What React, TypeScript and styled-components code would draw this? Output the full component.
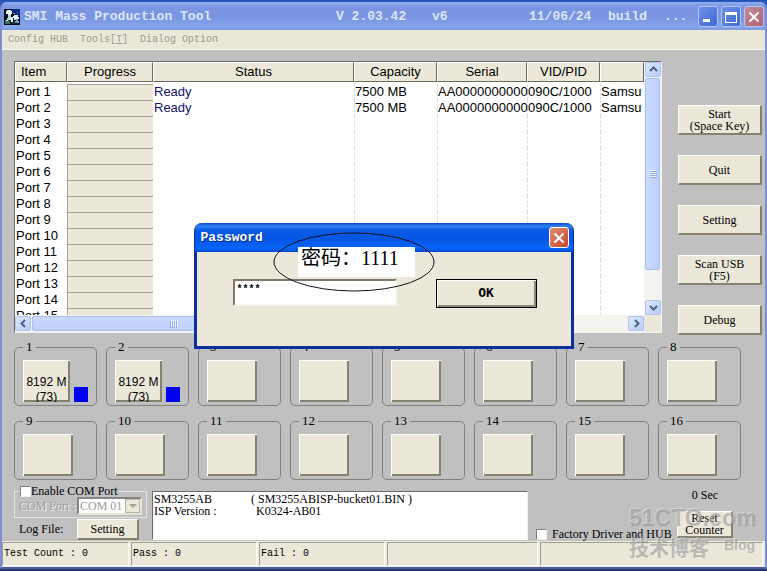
import React from "react";
import styled, { createGlobalStyle } from "styled-components";

const GRAY = "#c0c0c0";
const FACE = "#ebe8d9";
const SERIF = '"Liberation Serif", "Noto Sans CJK SC", serif';
const SANS = '"Liberation Sans", Arial, sans-serif';
const MONO = '"Liberation Mono", "Courier New", monospace';

const GlobalStyle = createGlobalStyle`
  * { box-sizing: border-box; }
  body { margin: 0; background: #2a56b8; color: #000; font-family: ${SERIF}; font-size: 12px; }
  button, input, select { font: inherit; color: inherit; margin: 0; }
`;

const Desktop = styled.div`
  position: relative;
  min-height: 100vh;
  padding-top: 2px;
  display: flex;
  flex-direction: column;
  background: linear-gradient(#1f4fb4, #2c5cc0 2px, #24386e);
`;

const AppWindow = styled.main`
  flex: 1;
  display: flex;
  flex-direction: column;
  border: solid #7b8fd2;
  border-width: 0 2px 0 2px;
  border-bottom: 2px solid #4a5f9e;
  margin-bottom: 2px;
  border-radius: 7px 7px 0 0;
  background: ${GRAY};
`;

const TitleBar = styled.header`
  height: 28px;
  display: flex;
  align-items: center;
  gap: 4px;
  padding: 1px 1px 0 2px;
  border-radius: 6px 6px 0 0;
  background: linear-gradient(#8fadee, #7b95e2 5px, #7a96e0 16px, #85a6ee 25px, #7c97de);
`;

const TitleText = styled.h1`
  flex: 1;
  display: grid;
  grid-template-columns: 312px 96px 97px 79px 56px auto;
  margin: 0;
  font: bold 13px/16px ${MONO};
  color: #dbe6fb;
  white-space: pre;
`;

const CaptionButtons = styled.div`
  display: flex;
  gap: 3px;
`;

const CaptionButton = styled.button<{ $tone: "blue" | "rose" | "red" }>`
  width: 20px;
  height: 21px;
  padding: 0;
  display: grid;
  place-items: center;
  border: 1px solid ${(p) => (p.$tone === "red" ? "#fff" : "#b4c5f3")};
  border-radius: 3px;
  background: ${(p) =>
    p.$tone === "blue"
      ? "linear-gradient(135deg, #6f90e6, #3f69d4)"
      : p.$tone === "rose"
        ? "linear-gradient(135deg, #c48a9c, #b0606c)"
        : "linear-gradient(135deg, #e29078, #c9452a)"};
`;

const MenuBar = styled.nav`
  height: 20px;
  display: flex;
  align-items: center;
  gap: 12px;
  padding: 1px 6px 0;
  background: ${FACE};
  border-bottom: 1px solid #f8f7f0;
`;

const MenuItem = styled.button`
  padding: 0;
  border: 0;
  background: none;
  font: 10px/14px ${MONO};
  color: #9d9a8b;
`;

const Content = styled.div`
  flex: 1;
  display: flex;
  flex-direction: column;
  gap: 5px;
  padding: 11px 3px 0 12px;
`;

const TopArea = styled.section`
  display: flex;
  gap: 16px;
`;

const ListFrame = styled.div`
  flex: 1;
  min-width: 0;
  height: 272px;
  display: grid;
  grid-template-columns: minmax(0, 1fr) 17px;
  grid-template-rows: minmax(0, 1fr) 17px;
  border: 1px solid;
  border-color: #6b6b6b #f4f4f4 #f4f4f4 #6b6b6b;
  background: #fff;
`;

const ListViewport = styled.div`
  overflow: hidden;
`;

const ListTable = styled.table`
  width: 100%;
  table-layout: fixed;
  border-collapse: separate;
  border-spacing: 0;
  font: 13px/16px ${SANS};
`;

const Col = styled.col<{ $w?: number }>`
  width: ${(p) => (p.$w ? `${p.$w}px` : "auto")};
`;

const HeadCell = styled.th<{ $left?: boolean }>`
  height: 20px;
  padding: ${(p) => (p.$left ? "0 0 0 5px" : "0")};
  font-weight: normal;
  text-align: ${(p) => (p.$left ? "left" : "center")};
  background: ${FACE};
  border: 1px solid;
  border-color: #fff #6c6a60 #6c6a60 #fff;
`;

const Spacer = styled.td`
  height: 2px;
  padding: 0;
`;

const Cell = styled.td<{ $kind?: "status" | "progress" | "ruled" }>`
  height: 16px;
  padding: ${(p) => (p.$kind === "ruled" ? "0" : "0 0 0 1px")};
  white-space: nowrap;
  color: ${(p) => (p.$kind === "status" ? "#101078" : "#000")};
  background: ${(p) => (p.$kind === "progress" ? FACE : "transparent")};
  border-left: ${(p) =>
    p.$kind === "ruled" ? "1px dashed #dcdcdc" : p.$kind === "progress" ? "1px solid #a5a296" : "0"};
  border-top: ${(p) => (p.$kind === "progress" ? "1px solid #a5a296" : "0")};
`;

const VScroll = styled.div`
  display: flex;
  flex-direction: column;
  gap: 1px;
  padding: 0 1px;
  background: #f4f3ee;
`;

const HScroll = styled.div`
  display: flex;
  gap: 1px;
  padding: 1px 0;
  background: #f4f3ee;
`;

const ScrollButton = styled.button`
  flex: none;
  width: 16px;
  height: 15px;
  padding: 0;
  display: grid;
  place-items: center;
  border: 1px solid #b0c4f0;
  border-radius: 2px;
  background: linear-gradient(135deg, #dde7fe, #b8ccfa);
`;

const Thumb = styled.div<{ $vertical?: boolean }>`
  flex: none;
  width: ${(p) => (p.$vertical ? "15px" : "45%")};
  height: ${(p) => (p.$vertical ? "192px" : "15px")};
  display: grid;
  place-items: center;
  border: 1px solid #a9bff0;
  border-radius: 2px;
  background: linear-gradient(${(p) => (p.$vertical ? "90deg" : "180deg")}, #cbdafd, #bccffb);
`;

const Track = styled.div`
  flex: 1;
`;

const Corner = styled.div`
  background: ${FACE};
`;

const SideButtons = styled.div`
  width: 84px;
  display: flex;
  flex-direction: column;
  gap: 20px;
  padding-top: 44px;
`;

const PushButton = styled.button<{ $h?: number }>`
  height: ${(p) => p.$h ?? 30}px;
  padding: 0 2px;
  border: solid;
  border-width: 1px 2px 2px 1px;
  border-color: #fff #85826f #85826f #fff;
  background: ${FACE};
  font: 12px/12px ${SERIF};
  white-space: pre-line;
`;

const SlotGrid = styled.section`
  display: grid;
  grid-template-columns: repeat(8, minmax(0, 1fr));
  gap: 8px 9px;
  padding-right: 21px;
`;

const Slot = styled.fieldset`
  min-width: 0;
  margin: 0;
  padding: 6px 8px 3px;
  border: 1px solid #808080;
  border-radius: 5px;
`;

const SlotLegend = styled.legend`
  padding: 0 3px;
  font: 13px/14px ${SERIF};
`;

const SlotBody = styled.div`
  display: flex;
  align-items: flex-end;
  gap: 4px;
`;

const SlotButton = styled.button`
  width: 50px;
  height: 42px;
  padding: 15px 0 0;
  display: flex;
  justify-content: center;
  align-items: flex-start;
  overflow: hidden;
  border: 0;
  background: ${FACE};
  box-shadow: inset 1px 1px #fff, inset -2px -2px #85826f;
  font: 12px/15px ${SANS};
  white-space: pre;
`;

const Led = styled.span`
  width: 15px;
  height: 15px;
  background: #0000f4;
`;

const BottomArea = styled.section`
  display: flex;
  gap: 5px;
`;

const ComColumn = styled.div`
  width: 133px;
  display: flex;
  flex-direction: column;
  gap: 1px;
`;

const ComGroup = styled.fieldset`
  margin: 0;
  min-width: 0;
  padding: 0 4px 2px 4px;
  border: 1px solid #e4e4e4;
`;

const CheckLabel = styled.label`
  display: flex;
  align-items: center;
  gap: 5px;
  font: 12px/12px ${SERIF};
`;

const CheckLegend = styled.legend`
  padding: 0 1px;
  & > ${CheckLabel} { gap: 0; }
`;

const CheckBox = styled.input`
  appearance: none;
  width: 11px;
  height: 11px;
  background: #fff;
  border: 1px solid;
  border-color: #808080 #f0f0f0 #f0f0f0 #808080;
`;

const ComRow = styled.div`
  display: flex;
  align-items: center;
  justify-content: space-between;
  white-space: nowrap;
`;

const ComLabel = styled.label`
  color: #9c9c9c;
  text-shadow: 1px 1px #f4f4f4;
`;

const SelectBox = styled.div`
  display: flex;
  align-items: center;
  height: 18px;
  background: #fff;
  border: 2px solid;
  border-color: #858585 #e6e4da #e6e4da #858585;
`;

const ComSelect = styled.select`
  appearance: none;
  width: 46px;
  height: 14px;
  padding: 0 0 0 1px;
  border: 0;
  background: #fff;
  color: #9c9a90;
  opacity: 1;
  font: 12px/14px ${SERIF};
`;

const SelectArrow = styled.span`
  display: grid;
  place-items: center;
  width: 15px;
  height: 14px;
  background: ${FACE};
  border: 1px solid #b9b6a6;
`;

const LogRow = styled.div`
  display: flex;
  align-items: center;
  justify-content: space-between;
  padding: 0 8px 0 5px;
  & > ${PushButton} { width: 62px; }
`;

const InfoBox = styled.div`
  flex: 1;
  min-width: 0;
  height: 49px;
  margin-top: 6px;
  padding: 1px 1px;
  background: #fff;
  border: 1px solid;
  border-color: #6b6b6b #f0f0f0 #fff #6b6b6b;
`;

const InfoList = styled.dl`
  display: grid;
  grid-template-columns: 97px 1fr;
  margin: 0;
  font: 12px/12px ${SERIF};
`;

const InfoTerm = styled.dt``;

const InfoValue = styled.dd<{ $indent?: boolean }>`
  margin: 0;
  padding-left: ${(p) => (p.$indent ? "5px" : "0")};
`;

const FactorySide = styled.div`
  width: 133px;
  display: flex;
  align-items: flex-end;
  padding-left: 3px;
  white-space: nowrap;
`;

const CounterSide = styled.div`
  width: 91px;
  display: flex;
  flex-direction: column;
  align-items: center;
  justify-content: flex-end;
  gap: 8px;
  padding: 0 23px 2px 0;
  white-space: nowrap;
  & > ${PushButton} { width: 56px; }
`;

const StatusBar = styled.footer`
  display: grid;
  grid-template-columns: 129px 128px 128px 153px minmax(0, 1fr);
  height: 26px;
  background: #efede2;
`;

const StatusCell = styled.div`
  display: flex;
  align-items: center;
  margin: 1px 2px 1px 0;
  padding-left: 1px;
  border: 1px solid;
  border-color: #a09d8e #fff #fff #a09d8e;
  background: ${FACE};
  font: 10px/14px ${MONO};
  white-space: pre;
`;

const DialogLayer = styled.div`
  position: absolute;
  inset: 0;
  display: grid;
  place-items: center;
`;

const DialogWindow = styled.section`
  position: relative;
  width: 380px;
  border: solid #0a2f9e;
  border-width: 0 3px 3px 3px;
  border-radius: 8px 8px 0 0;
  background: ${FACE};
`;

const DialogTitle = styled.header`
  height: 29px;
  margin: 0 -2px;
  display: flex;
  align-items: center;
  justify-content: space-between;
  padding: 1px 4px 0 6px;
  border-radius: 7px 7px 0 0;
  background: linear-gradient(#0a48c8, #2f83f4 3px, #0a5ae4 7px, #0556e6 17px, #0766fb 25px, #0448cc);
`;

const DialogHeading = styled.h2`
  margin: 0;
  font: bold 13px/16px ${MONO};
  color: #fff;
  text-shadow: 1px 1px #0a2c86;
`;

const DialogBody = styled.form`
  display: flex;
  align-items: flex-start;
  justify-content: space-between;
  height: 94px;
  padding: 27px 34px 0 36px;
`;

const PasswordInput = styled.input`
  width: 164px;
  height: 27px;
  padding: 0 2px 6px;
  border: 2px solid;
  border-color: #7d7a6d #f6f5ef #f6f5ef #7d7a6d;
  background: #fff;
  outline: none;
  font: bold 10px/14px ${MONO};
`;

const OkButton = styled.button`
  width: 101px;
  height: 29px;
  padding: 0;
  border: 1px solid #000;
  background: ${FACE};
  box-shadow: inset 1px 1px #fff, inset -2px -2px #8d8a7c;
  font: bold 13px/16px "DejaVu Sans Mono", monospace;
`;

const NoteMark = styled.div`
  position: absolute;
  left: 76px;
  top: 9px;
  width: 162px;
  height: 60px;
  padding-left: 6px;
  display: grid;
  place-items: center;
`;

const NoteText = styled.span`
  width: 117px;
  height: 30px;
  padding-left: 3px;
  background: #fff;
  font: 20px/22px "Liberation Serif", "Noto Sans CJK SC", serif;
  white-space: nowrap;
`;

const NoteRing = styled.svg`
  position: absolute;
  inset: 0;
`;

const Watermark = styled.div`
  position: absolute;
  right: 12px;
  bottom: 10px;
  width: 126px;
  display: flex;
  flex-wrap: wrap;
  justify-content: space-between;
  color: rgba(135, 135, 135, 0.5);
  text-shadow: -1px -1px rgba(235, 235, 235, 0.5);
  font: bold 20px/24px "Liberation Sans", "Noto Sans CJK SC", sans-serif;
  pointer-events: none;
`;

const WatermarkSite = styled.span`
  width: 100%;
  font-size: 23px;
  line-height: 38px;
`;

const WatermarkBlog = styled.span`
  font-size: 14px;
  line-height: 16px;
`;

const AppIcon = () => (
  <svg width="16" height="16" viewBox="0 0 16 16" shapeRendering="crispEdges" aria-hidden="true">
    <rect width="16" height="16" fill="#06101c" />
    <path d="M7 0h9v7h-4V5H9V3H7z" fill="#0b2a7c" />
    <path d="M3 1h4v1h1v3H7v1H4V5H2V2h1z" fill="#e8f4f4" />
    <path d="M4 6h3v2h2v2H7v1H3V9h1z" fill="#b9d8dc" />
    <path d="M10 6h4v2h1v2h-2v1h-3V9H9V7h1z" fill="#dceef4" />
    <path d="M1 11h4v1h1v3H1z" fill="#39735f" />
    <path d="M2 11h2v1H2zM6 9h3v4H7v-2H6z" fill="#f4ffff" />
    <path d="M8 13h3v2H8z" fill="#173b30" />
    <path d="M12 10h2v2h1v2h-4v-2h1z" fill="#6aa6c0" />
    <path d="M9 4h2v1H9zM13 3h1v1h-1z" fill="#4e86c8" />
  </svg>
);

const Cross = () => (
  <svg width="12" height="12" viewBox="0 0 12 12" aria-hidden="true">
    <path d="M1.5 1.5l9 9M10.5 1.5l-9 9" stroke="#fff" strokeWidth="2" />
  </svg>
);

const Arrow = ({ turn }: { turn: number }) => (
  <svg width="9" height="9" viewBox="0 0 9 9" aria-hidden="true">
    <path d="M1 6l3.500-3.500L8 6" transform={`rotate(${turn} 4.500 4.500)`} fill="none" stroke="#4d6185" strokeWidth="2" />
  </svg>
);

const Grip = ({ turn }: { turn: number }) => (
  <svg width="8" height="8" viewBox="0 0 8 8" shapeRendering="crispEdges" aria-hidden="true">
    <g transform={`rotate(${turn} 4 4)`}>
      <path d="M0 0h7v1H0zM0 2h7v1H0zM0 4h7v1H0zM0 6h7v1H0z" fill="#f1f6ff" />
      <path d="M1 1h7v1H1zM1 3h7v1H1zM1 5h7v1H1zM1 7h7v1H1z" fill="#8fa9e0" />
    </g>
  </svg>
);

const columns = [
  { name: "Item", width: 52 },
  { name: "Progress", width: 86 },
  { name: "Status", width: 201 },
  { name: "Capacity", width: 83 },
  { name: "Serial", width: 90 },
  { name: "VID/PID", width: 73 },
  { name: "", width: undefined },
];

const device = ["Ready", "7500 MB", "AA0000000000", "090C/1000", "Samsu"];
const ports = Array.from({ length: 15 }, (_, i) => ({
  name: `Port ${i + 1}`,
  values: i < 2 ? device : ["", "", "", "", ""],
}));
const slots = Array.from({ length: 16 }, (_, i) => i + 1);
const actions = ["Start\n(Space Key)", "Quit", "Setting", "Scan USB\n(F5)", "Debug"];
const counters = ["Test Count : 0", "Pass : 0", "Fail : 0", "", ""];

function PortList() {
  return (
    <ListFrame>
      <ListViewport>
        <ListTable>
          <colgroup>
            {columns.map((c) => (
              <Col key={c.name} $w={c.width} />
            ))}
          </colgroup>
          <thead>
            <tr>
              {columns.map((c, i) => (
                <HeadCell key={c.name} $left={i === 0}>
                  {c.name}
                </HeadCell>
              ))}
            </tr>
          </thead>
          <tbody>
            <tr>
              <Spacer colSpan={7} />
            </tr>
            {ports.map((p) => (
              <tr key={p.name}>
                <Cell>{p.name}</Cell>
                <Cell $kind="progress" />
                {p.values.map((v, i) => (
                  <Cell key={i} $kind={i === 0 ? "status" : "ruled"}>
                    {v}
                  </Cell>
                ))}
              </tr>
            ))}
          </tbody>
        </ListTable>
      </ListViewport>
      <VScroll>
        <ScrollButton aria-label="Scroll up"><Arrow turn={0} /></ScrollButton>
        <Thumb $vertical><Grip turn={0} /></Thumb>
        <Track />
        <ScrollButton aria-label="Scroll down"><Arrow turn={180} /></ScrollButton>
      </VScroll>
      <HScroll>
        <ScrollButton aria-label="Scroll left"><Arrow turn={270} /></ScrollButton>
        <Thumb><Grip turn={90} /></Thumb>
        <Track />
        <ScrollButton aria-label="Scroll right"><Arrow turn={90} /></ScrollButton>
      </HScroll>
      <Corner />
    </ListFrame>
  );
}

function PasswordDialog() {
  return (
    <DialogLayer>
      <DialogWindow role="dialog" aria-labelledby="password-title">
        <DialogTitle>
          <DialogHeading id="password-title">Password</DialogHeading>
          <CaptionButton $tone="red" aria-label="Close dialog"><Cross /></CaptionButton>
        </DialogTitle>
        <DialogBody onSubmit={(e) => e.preventDefault()}>
          <PasswordInput aria-labelledby="password-title" defaultValue="****" />
          <OkButton type="submit">OK</OkButton>
        </DialogBody>
        <NoteMark>
          <NoteText>密码：1111</NoteText>
          <NoteRing width="162" height="60" viewBox="0 0 162 60" aria-hidden="true">
            <ellipse cx="81" cy="30" rx="80" ry="29" fill="none" stroke="#101020" />
          </NoteRing>
        </NoteMark>
      </DialogWindow>
    </DialogLayer>
  );
}

export default function App() {
  return (
    <Desktop>
      <GlobalStyle />
      <AppWindow>
        <TitleBar>
          <AppIcon />
          <TitleText>
            <span>SMI Mass Production Tool</span>
            <span>V 2.03.42</span>
            <span>v6</span>
            <span>11/06/24</span>
            <span>build</span>
            <span>...</span>
          </TitleText>
          <CaptionButtons>
            <CaptionButton $tone="blue" aria-label="Minimize">
              <svg width="12" height="12" aria-hidden="true"><path d="M1 8h7v3H1z" fill="#fff" /></svg>
            </CaptionButton>
            <CaptionButton $tone="blue" aria-label="Maximize">
              <svg width="12" height="12" aria-hidden="true"><path d="M0 1h12v11H0zM1 4v7h10V4z" fill="#fff" fillRule="evenodd" /></svg>
            </CaptionButton>
            <CaptionButton $tone="rose" aria-label="Close"><Cross /></CaptionButton>
          </CaptionButtons>
        </TitleBar>
        <MenuBar>
          <MenuItem>Config HUB</MenuItem>
          <MenuItem>Tools[<u>T</u>]</MenuItem>
          <MenuItem>Dialog Option</MenuItem>
        </MenuBar>
        <Content>
          <TopArea>
            <PortList />
            <SideButtons>
              {actions.map((a) => (
                <PushButton key={a}>{a}</PushButton>
              ))}
            </SideButtons>
          </TopArea>
          <SlotGrid>
            {slots.map((n) => (
              <Slot key={n}>
                <SlotLegend>{n}</SlotLegend>
                <SlotBody>
                  <SlotButton aria-label={`Slot ${n}`}>{n < 3 ? "8192 M\n(73)" : ""}</SlotButton>
                  {n < 3 && <Led />}
                </SlotBody>
              </Slot>
            ))}
          </SlotGrid>
          <BottomArea>
            <ComColumn>
              <ComGroup>
                <CheckLegend>
                  <CheckLabel>
                    <CheckBox type="checkbox" />
                    Enable COM Port
                  </CheckLabel>
                </CheckLegend>
                <ComRow>
                  <ComLabel htmlFor="com-port">COM Port :</ComLabel>
                  <SelectBox>
                    <ComSelect id="com-port" disabled>
                      <option>COM 01</option>
                    </ComSelect>
                    <SelectArrow>
                      <svg width="8" height="5" aria-hidden="true"><path d="M0 0h8L4 4z" fill="#a5a295" /></svg>
                    </SelectArrow>
                  </SelectBox>
                </ComRow>
              </ComGroup>
              <LogRow>
                <span>Log File:</span>
                <PushButton $h={21}>Setting</PushButton>
              </LogRow>
            </ComColumn>
            <InfoBox>
              <InfoList>
                <InfoTerm>SM3255AB</InfoTerm>
                <InfoValue>( SM3255ABISP-bucket01.BIN )</InfoValue>
                <InfoTerm>ISP Version :</InfoTerm>
                <InfoValue $indent>K0324-AB01</InfoValue>
              </InfoList>
            </InfoBox>
            <FactorySide>
              <CheckLabel>
                <CheckBox type="checkbox" />
                Factory Driver and HUB
              </CheckLabel>
            </FactorySide>
            <CounterSide>
              <span>0 Sec</span>
              <PushButton $h={27}>{"Reset\nCounter"}</PushButton>
            </CounterSide>
          </BottomArea>
        </Content>
        <StatusBar>
          {counters.map((c, i) => (
            <StatusCell key={i}>{c}</StatusCell>
          ))}
        </StatusBar>
      </AppWindow>
      <Watermark>
        <WatermarkSite>51CTO.com</WatermarkSite>
        <span>技术博客</span>
        <WatermarkBlog>Blog</WatermarkBlog>
      </Watermark>
      <PasswordDialog />
    </Desktop>
  );
}
